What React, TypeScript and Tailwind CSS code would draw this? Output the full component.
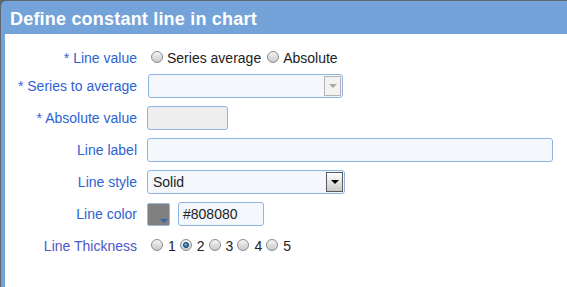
import React from "react";

const labelCls = "text-right text-[14px] leading-none text-[#2d62d4]";

const Radio: React.FC<{ checked?: boolean }> = ({ checked }) => (
  <span className="relative inline-block h-[12px] w-[12px] shrink-0 rounded-full border border-[#8c8c8c] bg-[linear-gradient(180deg,#f4f4f4,#c9c9c9)]">
    {checked && (
      <span className="absolute left-[2px] top-[2px] h-[6px] w-[6px] rounded-full border border-[#0e3a5c] bg-[radial-gradient(circle_at_35%_35%,#5fb6ec,#1063a0)]" />
    )}
  </span>
);

const Row: React.FC<{ label: string; className?: string; labelClass?: string; children: React.ReactNode }> = ({
  label,
  className = "h-[24px] mt-[8px]",
  labelClass = labelCls,
  children,
}) => (
  <div className={`grid grid-cols-[132px_1fr] items-center gap-x-[10px] ${className}`}>
    <div className={labelClass}>{label}</div>
    <div className="flex h-full items-center">{children}</div>
  </div>
);

export default function App() {
  return (
    <div
      className="h-[287px] w-[567px] overflow-hidden bg-[#5e6670] pl-[1px] pt-[1px]"
      style={{ fontFamily: '"Liberation Sans", Arial, sans-serif' }}
    >
      <div className="flex h-full flex-col rounded-tl-[5px] bg-[#74a3d9]">
        {/* Title bar */}
        <div className="flex h-[33px] shrink-0 items-center pl-[9px] pt-[4px] text-[18px] font-bold tracking-[0.2px] text-white">
          Define constant line in chart
        </div>

        {/* Body */}
        <div className="ml-[4px] flex-1 bg-white pt-[12px] text-[#222]">
          <Row label="* Line value" className="h-[22px]">
            <span className="ml-[4px]"><Radio /></span>
            <span className="ml-[4px] text-[14px]">Series average</span>
            <span className="ml-[6px]"><Radio /></span>
            <span className="ml-[4px] text-[14px]">Absolute</span>
          </Row>

          <Row label="* Series to average" className="h-[24px] mt-[6px]">
            <div className="relative ml-[1px] h-[24px] w-[195px] rounded-[3px] border border-[#8fb3e2] bg-[#f4f8fc]">
              <span className="absolute right-[1px] top-[1px] flex h-[20px] w-[17px] items-center justify-center border border-[#b4b4b4] bg-[#f2f2f2]">
                <span className="h-0 w-0 border-x-[4px] border-t-[4px] border-x-transparent border-t-[#a8a8a8]" />
              </span>
            </div>
          </Row>

          <Row label="* Absolute value">
            <div className="h-[24px] w-[81px] rounded-[3px] border border-[#8fb3e2] bg-[#eeeeee]" />
          </Row>

          <Row label="Line label">
            <div className="h-[24px] w-[406px] rounded-[3px] border border-[#8fb3e2] bg-[#f4f8fc]" />
          </Row>

          <Row label="Line style">
            <div className="relative flex h-[24px] w-[198px] items-center rounded-[3px] border border-[#8fb3e2] bg-[#f4f8fc] pl-[5px] text-[14px]">
              Solid
              <span className="absolute right-[1px] top-[1px] flex h-[20px] w-[17px] items-center justify-center border border-[#5a5a5a] bg-[linear-gradient(180deg,#ffffff,#c8c8c8)]">
                <span className="h-0 w-0 border-x-[4px] border-t-[4px] border-x-transparent border-t-black" />
              </span>
            </div>
          </Row>

          <Row label="Line color">
            <div className="relative h-[23px] w-[23px] rounded-[2px] border border-[#9fb6d4] bg-[#808080]">
              <span className="absolute bottom-[2px] right-[1px] h-0 w-0 border-x-[4px] border-t-[4px] border-x-transparent border-t-[#2f62b0]" />
            </div>
            <div className="ml-[8px] flex h-[24px] w-[86px] items-center rounded-[3px] border border-[#8fb3e2] bg-[#f4f8fc] pl-[4px] text-[14px]">
              #808080
            </div>
          </Row>

          <Row
            label="Line Thickness"
            className="h-[18px] mt-[8px]"
            labelClass="text-right text-[14px] leading-none text-[#4f55c4]"
          >
            {["1", "2", "3", "4", "5"].map((n) => (
              <span key={n} className="flex items-center">
                <span className="ml-[4px]">
                  <Radio checked={n === "2"} />
                </span>
                <span className="ml-[5px] text-[14px]">{n}</span>
              </span>
            ))}
          </Row>
        </div>
      </div>
    </div>
  );
}
